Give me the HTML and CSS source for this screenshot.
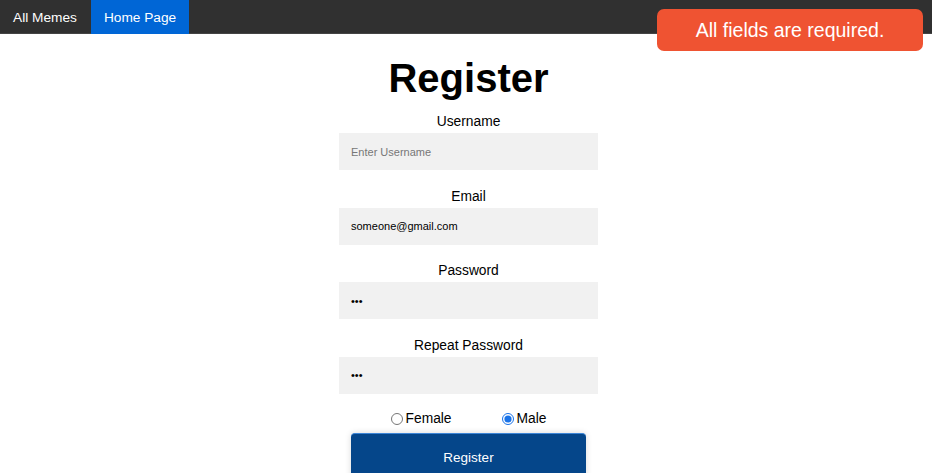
FILE: index.html
```html
<!DOCTYPE html>
<html lang="en">
<head>
<meta charset="utf-8">
<title>Register</title>
<link rel="stylesheet" href="styles.css">
</head>
<body>
<nav class="nav">
  <a class="nav-item" href="#">All Memes</a>
  <a class="nav-item nav-item-active" href="#">Home Page</a>
</nav>
<div class="toast">All fields are required.</div>
<main class="main">
  <form class="form">
    <h1 class="title">Register</h1>
    <div class="group">
      <label class="label" for="username">Username</label>
      <input class="input" id="username" type="text" placeholder="Enter Username">
    </div>
    <div class="group">
      <label class="label" for="email">Email</label>
      <input class="input" id="email" type="text" value="someone@gmail.com">
    </div>
    <div class="group">
      <label class="label" for="password">Password</label>
      <input class="input" id="password" type="password" value="123">
    </div>
    <div class="group">
      <label class="label" for="repeat">Repeat Password</label>
      <input class="input" id="repeat" type="password" value="123">
    </div>
    <div class="radios">
      <label class="radio"><input type="radio" name="gender" value="female">Female</label>
      <label class="radio"><input type="radio" name="gender" value="male" checked>Male</label>
    </div>
    <button class="button" type="button">Register</button>
    <div class="footer-shadow"></div>
  </form>
</main>
</body>
</html>
```
FILE: styles.css
```css
* { box-sizing: border-box; }
html, body { margin: 0; padding: 0; }
body {
  font-family: "Liberation Sans", Arial, sans-serif;
  background: #ffffff;
  color: #000;
  overflow: hidden;
}
.nav {
  display: flex;
  height: 34px;
  background: #303030;
  border-bottom: 1px solid #444;
}
.nav-item {
  display: flex;
  align-items: center;
  padding: 0 13px;
  height: 34px;
  color: #fff;
  text-decoration: none;
  font-size: 13.7px;
}
.nav-item-active { background: #0066d6; margin-left: 1px; }
.toast {
  position: fixed;
  top: 9px;
  right: 9px;
  width: 266px;
  height: 42px;
  background: #ef5332;
  color: #fff;
  border-radius: 7px;
  font-size: 19.5px;
  display: flex;
  align-items: center;
  justify-content: center;
}
.main {
  display: flex;
  justify-content: center;
  padding-left: 5px;
}
.form {
  display: flex;
  flex-direction: column;
  align-items: center;
  width: 259px;
}
.title {
  margin: 21px 0 13px;
  font-size: 40px;
  line-height: 46px;
  font-weight: bold;
  white-space: nowrap;
}
.group {
  display: flex;
  flex-direction: column;
  align-items: center;
  width: 100%;
  margin-bottom: 18.5px;
}
.label {
  font-size: 13.8px;
  line-height: 15px;
  margin-bottom: 4px;
}
.input {
  width: 259px;
  height: 37px;
  border: none;
  outline: none;
  background: #f1f1f1;
  padding: 0 12px;
  font-family: "Liberation Sans", Arial, sans-serif;
  font-size: 11px;
  color: #000;
}
.input::placeholder { color: #777; }
.radios {
  display: flex;
  gap: 50px;
  height: 20px;
  align-items: center;
  margin-top: -3.5px;
}
.radio {
  display: flex;
  align-items: center;
  font-size: 13.8px;
}
.radio input {
  margin: 0 3px 0 0;
  width: 12px;
  height: 12px;
  accent-color: #1a73e8;
}
.button {
  margin-top: 4px;
  width: 235px;
  height: 48px;
  flex: none;
  background: #05468a;
  color: #fff;
  border: none;
  border-top: 1px solid #3d86d8;
  border-radius: 4px 4px 0 0;
  font-family: "Liberation Sans", Arial, sans-serif;
  font-size: 13.5px;
  box-shadow: 0 0 6px rgba(0,0,0,0.15);
}
.footer-shadow {
  width: 630px;
  height: 20px;
  flex: none;
  box-shadow: 0 -1px 8px rgba(0,0,0,0.06);
}
```
